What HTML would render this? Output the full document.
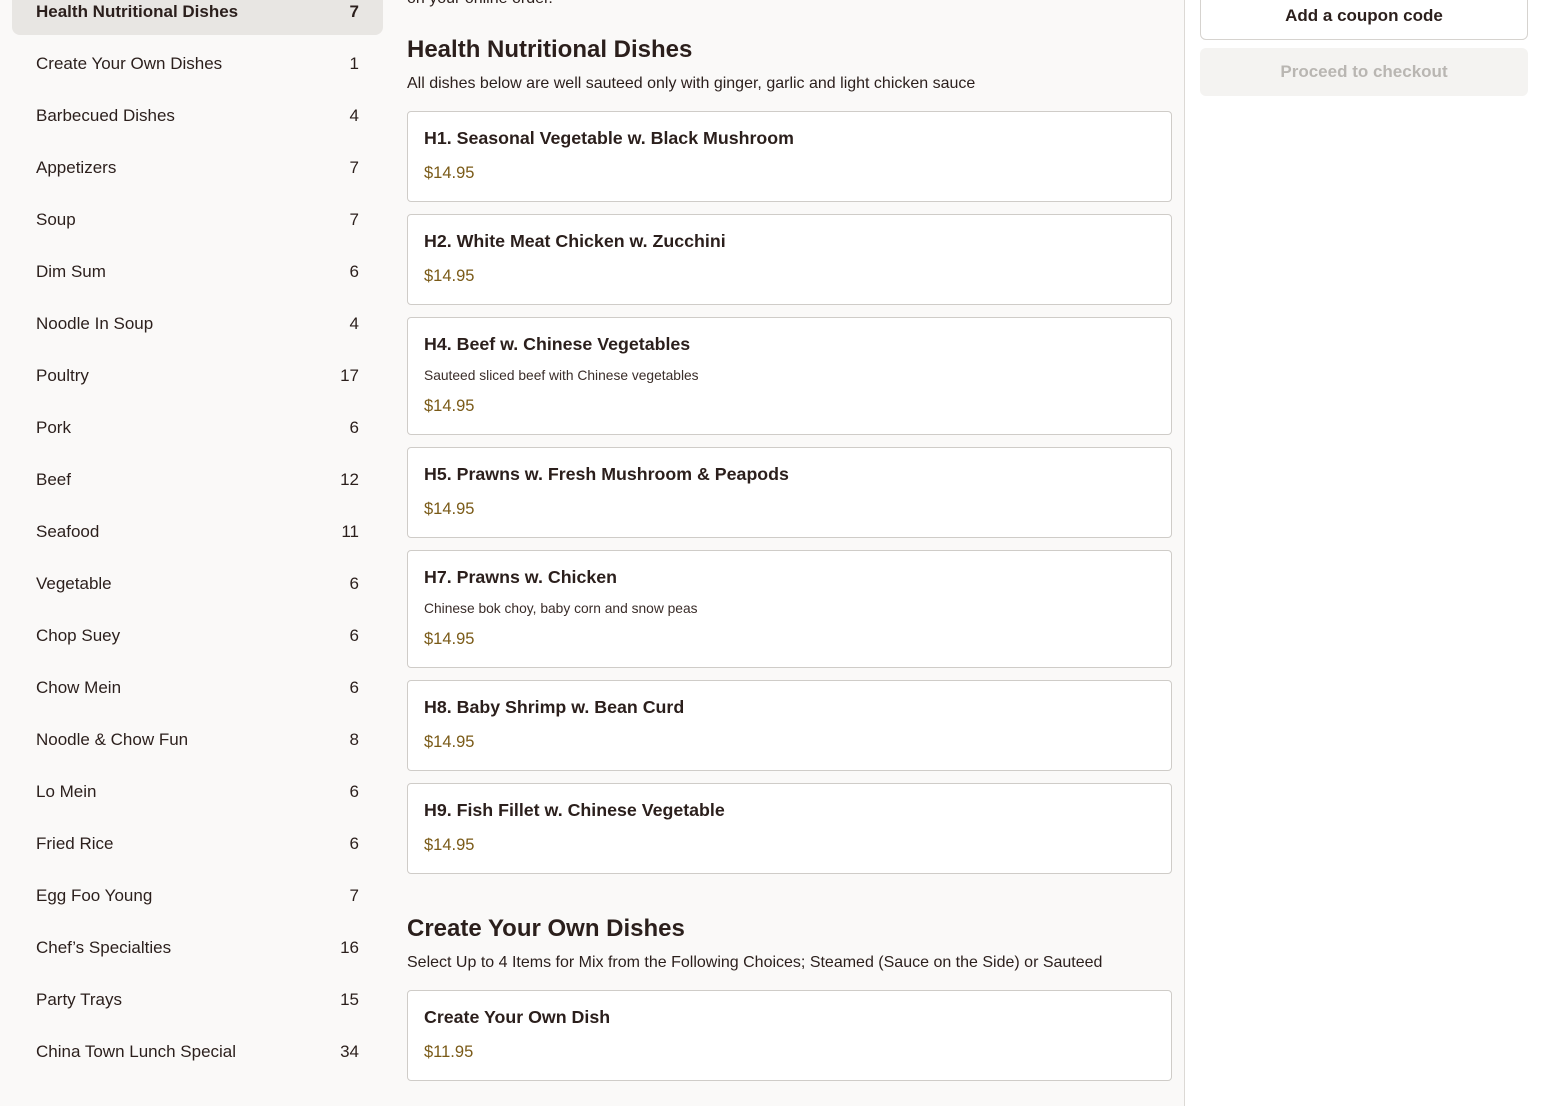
<!DOCTYPE html>
<html><head><meta charset="utf-8"><style>
*{margin:0;padding:0;box-sizing:border-box}
body{width:1544px;height:1106px;overflow:hidden;background:#faf9f8;font-family:"Liberation Sans",sans-serif;color:#2b1f1c;position:relative}
.a{position:absolute;white-space:nowrap}
.sel{position:absolute;left:12px;top:-14px;width:371px;height:49px;background:#e8e6e3;border-radius:8px}
.row{position:absolute;left:36px;width:323px;font-size:17px;line-height:20px;color:#2b1f1c}
.row span{position:absolute;right:0}
.card{position:absolute;left:407px;width:765px;background:#fff;border:1px solid #cfccc8;border-radius:4px}
.card h3{position:absolute;left:16px;top:15px;font-size:17.8px;font-weight:bold;line-height:22px;color:#2b1f1c}
.card .d{position:absolute;left:16px;top:49px;font-size:13.8px;line-height:18px;color:#3a2d29}
.card .p{position:absolute;left:16px;font-size:16.5px;line-height:20px;color:#7a5a17}
h2{position:absolute;left:407px;font-size:24px;font-weight:bold;line-height:30px;color:#2b1f1c}
.sub{position:absolute;left:407px;font-size:16px;line-height:20px;color:#2b1f1c}
</style></head><body>
<div class="a" style="left:1184px;top:0;width:360px;height:1106px;background:#fff;border-left:1px solid #dcd9d5"></div>
<div class="sel"></div>
<div class="row" style="top:2px;font-weight:bold">Health Nutritional Dishes<span>7</span></div>
<div class="row" style="top:54px">Create Your Own Dishes<span>1</span></div>
<div class="row" style="top:106px">Barbecued Dishes<span>4</span></div>
<div class="row" style="top:158px">Appetizers<span>7</span></div>
<div class="row" style="top:210px">Soup<span>7</span></div>
<div class="row" style="top:262px">Dim Sum<span>6</span></div>
<div class="row" style="top:314px">Noodle In Soup<span>4</span></div>
<div class="row" style="top:366px">Poultry<span>17</span></div>
<div class="row" style="top:418px">Pork<span>6</span></div>
<div class="row" style="top:470px">Beef<span>12</span></div>
<div class="row" style="top:522px">Seafood<span>11</span></div>
<div class="row" style="top:574px">Vegetable<span>6</span></div>
<div class="row" style="top:626px">Chop Suey<span>6</span></div>
<div class="row" style="top:678px">Chow Mein<span>6</span></div>
<div class="row" style="top:730px">Noodle &amp; Chow Fun<span>8</span></div>
<div class="row" style="top:782px">Lo Mein<span>6</span></div>
<div class="row" style="top:834px">Fried Rice<span>6</span></div>
<div class="row" style="top:886px">Egg Foo Young<span>7</span></div>
<div class="row" style="top:938px">Chef’s Specialties<span>16</span></div>
<div class="row" style="top:990px">Party Trays<span>15</span></div>
<div class="row" style="top:1042px">China Town Lunch Special<span>34</span></div>

<div class="sub" style="top:-11px">on your online order.</div>
<h2 style="top:35px">Health Nutritional Dishes</h2>
<div class="sub" style="top:74px">All dishes below are well sauteed only with ginger, garlic and light chicken sauce</div>

<div class="card" style="top:111px;height:91px"><h3>H1. Seasonal Vegetable w. Black Mushroom</h3><div class="p" style="top:51px">$14.95</div></div>
<div class="card" style="top:214px;height:91px"><h3>H2. White Meat Chicken w. Zucchini</h3><div class="p" style="top:51px">$14.95</div></div>
<div class="card" style="top:317px;height:118px"><h3>H4. Beef w. Chinese Vegetables</h3><div class="d">Sauteed sliced beef with Chinese vegetables</div><div class="p" style="top:78px">$14.95</div></div>
<div class="card" style="top:447px;height:91px"><h3>H5. Prawns w. Fresh Mushroom &amp; Peapods</h3><div class="p" style="top:51px">$14.95</div></div>
<div class="card" style="top:550px;height:118px"><h3>H7. Prawns w. Chicken</h3><div class="d">Chinese bok choy, baby corn and snow peas</div><div class="p" style="top:78px">$14.95</div></div>
<div class="card" style="top:680px;height:91px"><h3>H8. Baby Shrimp w. Bean Curd</h3><div class="p" style="top:51px">$14.95</div></div>
<div class="card" style="top:783px;height:91px"><h3>H9. Fish Fillet w. Chinese Vegetable</h3><div class="p" style="top:51px">$14.95</div></div>

<h2 style="top:914px">Create Your Own Dishes</h2>
<div class="sub" style="top:953px">Select Up to 4 Items for Mix from the Following Choices; Steamed (Sauce on the Side) or Sauteed</div>
<div class="card" style="top:990px;height:91px"><h3>Create Your Own Dish</h3><div class="p" style="top:51px">$11.95</div></div>

<div class="a" style="left:1200px;top:-10px;width:328px;height:50px;background:#fff;border:1px solid #d6d3cf;border-radius:6px;text-align:center;font-size:17px;font-weight:bold;line-height:48px;padding-top:1px;color:#2b1f1c">Add a coupon code</div>
<div class="a" style="left:1200px;top:48px;width:328px;height:48px;background:#f4f3f1;border-radius:6px;text-align:center;font-size:17px;font-weight:bold;line-height:47px;color:#b9b6b2">Proceed to checkout</div>
</body></html>
